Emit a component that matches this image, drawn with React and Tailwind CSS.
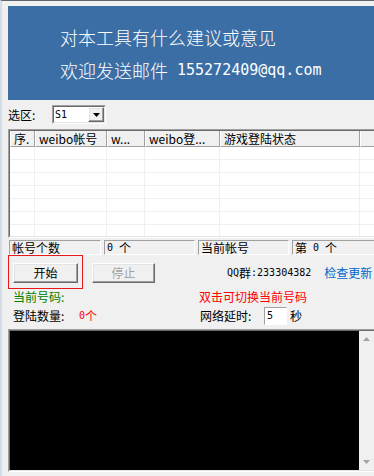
import React from 'react';

const cjk = "font-['Noto_Sans_CJK_SC',sans-serif]";
const mono = "font-['DejaVu_Sans_Mono',monospace]";

const sunken = 'border border-t-[#a0a0a0] border-l-[#a0a0a0] border-b-white border-r-white';
const raised =
  'border border-t-white border-l-white border-b-[#696969] border-r-[#696969] shadow-[inset_-1px_-1px_0_#a0a0a0,inset_1px_1px_0_#e3e3e3] bg-[#f0f0f0]';

const cols = [
  { w: 'w-[25px]', label: '序.' },
  { w: 'w-[72px]', label: 'weibo帐号' },
  { w: 'w-[38px]', label: 'w...' },
  { w: 'w-[75px]', label: 'weibo登...' },
  { w: 'w-[140px]', label: '游戏登陆状态' },
  { w: 'w-[40px]', label: '' },
];

const HeaderCell = ({ w, label }) => (
  <div
    className={`${w} h-full shrink-0 flex items-center pl-[3px] text-[12px] leading-none text-black whitespace-nowrap overflow-hidden border-l border-l-white border-r border-r-[#a0a0a0] border-b border-b-[#a0a0a0]`}
  >
    {label}
  </div>
);

const Status = ({ w, children }) => (
  <div className={`${w} h-full shrink-0 ${sunken} flex items-center pl-[2px] text-[12px] leading-none whitespace-nowrap`}>
    {children}
  </div>
);

export default function App() {
  return (
    <div
      className={`w-[374px] h-[476px] overflow-hidden bg-[#f0f0f0] border-t border-t-[#5f6670] border-l-2 border-l-[#d3dde9] ${cjk} text-black flex flex-col`}
    >
      {/* banner */}
      <div className="ml-[6px] mt-[5px] h-[94px] bg-[#3b6ea5] pl-[52px] pt-[21px] flex flex-col gap-[13px] text-white text-[18px] leading-[20px] font-light">
        <div>对本工具有什么建议或意见</div>
        <div className="flex items-center">
          <span>欢迎发送邮件</span>
          <span className={`${mono} text-[15px] ml-[9px]`}>155272409@qq.com</span>
        </div>
      </div>

      {/* server select */}
      <div className="mt-[5px] h-[19px] pl-[6px] flex items-center text-[12px] leading-none">
        <span className="w-[44px]">选区:</span>
        <div className="w-[54px] h-[19px] border border-t-[#a0a0a0] border-l-[#a0a0a0] border-b-white border-r-white">
          <div className="w-full h-full border border-t-[#696969] border-l-[#696969] border-b-[#e3e3e3] border-r-[#e3e3e3] bg-white flex items-center">
            <span className={`${mono} text-[10px] pl-[1px] flex-1`}>S1</span>
            <div className={`w-[16px] h-[15px] ${raised} flex items-center justify-center`}>
              <svg width="7" height="4" viewBox="0 0 7 4">
                <path d="M0 0h7L3.5 4z" fill="#000" />
              </svg>
            </div>
          </div>
        </div>
      </div>

      {/* list */}
      <div className="mt-[5px] ml-[6px] w-[372px] h-[109px] border border-t-[#a0a0a0] border-l-[#a0a0a0] border-b-white border-r-0">
        <div className="w-full h-full border border-t-[#696969] border-l-[#696969] border-b-[#e3e3e3] border-r-0 bg-white flex flex-col">
          <div className="h-[16px] flex bg-[#f0f0f0]">
            {cols.map((c, i) => (
              <HeaderCell key={i} {...c} />
            ))}
          </div>
          <div className="flex-1 overflow-hidden">
            {Array.from({ length: 7 }).map((_, r) => (
              <div key={r} className="h-[13px] flex border-b border-b-[#f0f0f0]">
                {cols.map((c, i) => (
                  <div key={i} className={`${c.w} h-full shrink-0 border-r border-r-[#f0f0f0]`} />
                ))}
              </div>
            ))}
          </div>
        </div>
      </div>

      {/* status bar */}
      <div className="mt-[2px] h-[15px] pl-[7px] flex gap-[3px]">
        <Status w="w-[92px]">帐号个数</Status>
        <Status w="w-[91px]">
          <span className={`${mono} text-[10px]`}>0</span>
          <span className="ml-[6px]">个</span>
        </Status>
        <Status w="w-[91px]">当前帐号</Status>
        <Status w="w-[90px]">
          <span>第</span>
          <span className={`${mono} text-[10px] mx-[6px]`}>0</span>
          <span>个</span>
        </Status>
      </div>

      {/* buttons */}
      <div className="h-[34px] pl-[6px] flex items-start text-[12px] leading-none">
        <div className="w-[75px] h-[34px] border border-[#e81818] pl-[4px] pt-[7px]">
          <div className={`w-[65px] h-[20px] ${raised} flex items-center justify-center`}>开始</div>
        </div>
        <div className={`ml-[9px] mt-[8px] w-[63px] h-[20px] ${raised} flex items-center justify-center text-[#a0a0a0]`}>
          停止
        </div>
        <div className="ml-[72px] mt-[12px] flex items-center">
          <span className={`${mono} text-[10px]`}>QQ</span>
          <span>群</span>
          <span className={`${mono} text-[10px]`}>:233304382</span>
        </div>
        <span className="ml-[13px] mt-[12px] text-[#0066cc]">检查更新</span>
      </div>

      <div className="h-[16px] pl-[11px] flex items-center text-[12px] leading-none">
        <span className="w-[186px] text-[#008000]">当前号码:</span>
        <span className="text-[#ff0000]">双击可切换当前号码</span>
      </div>

      <div className="h-[22px] pl-[11px] flex items-center text-[12px] leading-none">
        <span className="w-[66px]">登陆数量:</span>
        <span className="w-[121px] text-[#ff0000] flex items-center">
          <span className={`${mono} text-[10px]`}>0</span>个
        </span>
        <span className="w-[64px]">网络延时:</span>
        <div className={`w-[23px] h-[18px] ${sunken} bg-white flex items-center pl-[2px]`}>
          <span className={`${mono} text-[10px]`}>5</span>
        </div>
        <span className="ml-[3px]">秒</span>
      </div>

      {/* console */}
      <div className="mt-[2px] ml-[6px] w-[372px] h-[143px] border border-t-[#a0a0a0] border-l-[#a0a0a0] border-b-white border-r-0">
        <div className="w-full h-full border border-t-[#696969] border-l-[#696969] border-b-[#e3e3e3] border-r-0 flex">
          <div className="w-[349px] h-full bg-black" />
          <div className="w-[15px] h-full bg-[#f0f0f0] flex flex-col items-center justify-between py-[6px]">
            <svg width="7" height="4" viewBox="0 0 7 4">
              <path d="M3.5 0L7 4H0z" fill="#a3a3a3" />
            </svg>
            <svg width="7" height="4" viewBox="0 0 7 4">
              <path d="M0 0h7L3.5 4z" fill="#a3a3a3" />
            </svg>
          </div>
        </div>
      </div>
    </div>
  );
}
